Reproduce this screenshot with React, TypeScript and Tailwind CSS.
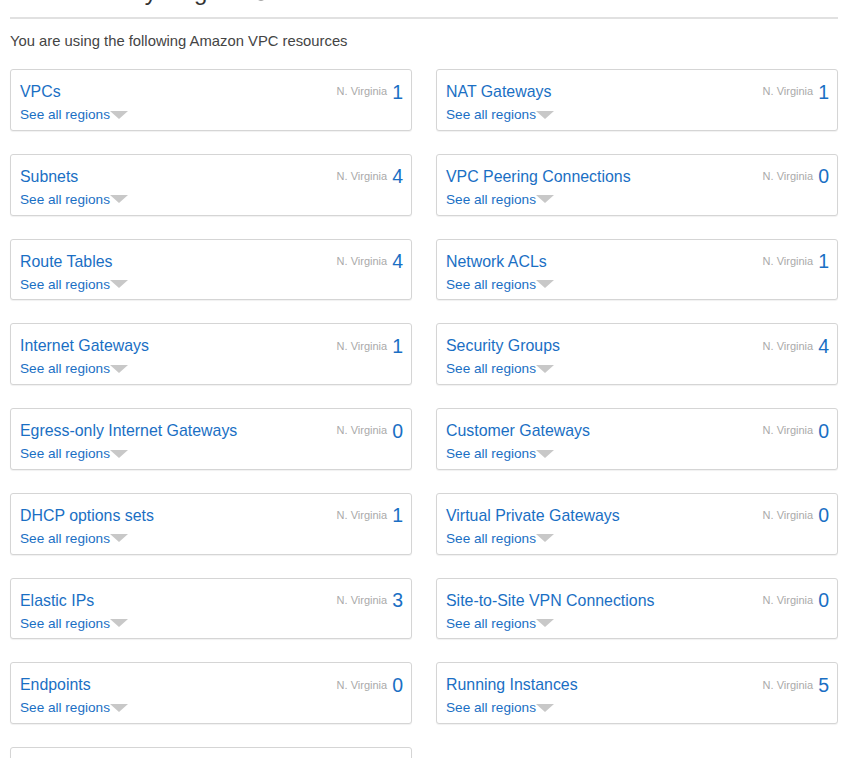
import { RotateCw } from "lucide-react";

type Resource = {
  name: string;
  count: number;
};

const resources: Resource[] = [
  { name: "VPCs", count: 1 },
  { name: "NAT Gateways", count: 1 },
  { name: "Subnets", count: 4 },
  { name: "VPC Peering Connections", count: 0 },
  { name: "Route Tables", count: 4 },
  { name: "Network ACLs", count: 1 },
  { name: "Internet Gateways", count: 1 },
  { name: "Security Groups", count: 4 },
  { name: "Egress-only Internet Gateways", count: 0 },
  { name: "Customer Gateways", count: 0 },
  { name: "DHCP options sets", count: 1 },
  { name: "Virtual Private Gateways", count: 0 },
  { name: "Elastic IPs", count: 3 },
  { name: "Site-to-Site VPN Connections", count: 0 },
  { name: "Endpoints", count: 0 },
  { name: "Running Instances", count: 5 },
  { name: "Endpoint Services", count: 0 },
];

function ResourceCard({ item }: { item: Resource }) {
  return (
    <div className="h-[61.75px] border border-[#d5d5d5] rounded-[3px] bg-white shadow-[0_1px_1px_rgba(0,0,0,0.06)] pl-[9px] pr-[8px] pt-[12px]">
      <div className="flex items-start justify-between">
        <a className="text-[15.9px] leading-[20px] text-[#1a6fc4] cursor-pointer">
          {item.name}
        </a>
        <div className="flex items-start gap-[5px]">
          <span className="text-[11px] leading-[14px] text-[#aaaaaa] mt-[2.4px]">
            N. Virginia
          </span>
          <span className="text-[19.5px] leading-[20px] text-[#1a6fc4] mt-[-0.5px]">
            {item.count}
          </span>
        </div>
      </div>
      <div className="flex items-center mt-[5px]">
        <a className="text-[13.6px] leading-[16px] text-[#1a6fc4] cursor-pointer">
          See all regions
        </a>
        <span className="w-0 h-0 border-l-[9px] border-r-[9px] border-t-[8px] border-l-transparent border-r-transparent border-t-[#c8c8c8] mb-[1px]" />
      </div>
    </div>
  );
}

export default function App() {
  return (
    <div className="w-[853px] h-[758px] overflow-hidden bg-white font-['Liberation_Sans',Arial,sans-serif]">
      <div className="w-[828px] ml-[10px] mt-[-22px]">
        <h1 className="flex items-center gap-[14px] text-[24px] leading-[28px] text-[#333333] pb-[11px] border-b-2 border-[#e1e1e1]">
          Resources by Region
          <RotateCw size={16} className="text-[#888888] mt-[4px]" />
        </h1>
        <p className="text-[14.8px] leading-[20px] text-[#444444] mt-[12px]">
          You are using the following Amazon VPC resources
        </p>
        <div className="grid grid-cols-2 gap-x-[24px] gap-y-[23px] mt-[18px]">
          {resources.map((r) => (
            <ResourceCard key={r.name} item={r} />
          ))}
        </div>
      </div>
    </div>
  );
}
